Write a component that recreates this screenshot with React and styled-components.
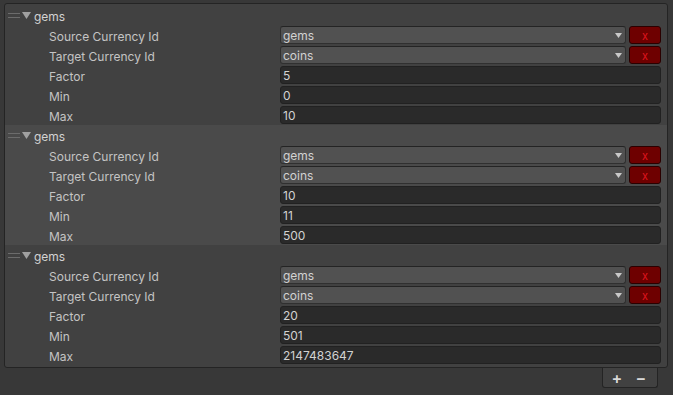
import React from "react";
import styled, { createGlobalStyle } from "styled-components";

const Global = createGlobalStyle`
  html, body { margin: 0; padding: 0; background: #383838; }
  body { font-family: Inter, "Noto Sans", sans-serif; font-size: 12px; color: #c4c4c4; }
  * { box-sizing: border-box; }
`;

const Page = styled.div`
  width: 673px;
  height: 395px;
  padding: 3px 5px 0 4px;
  display: flex;
  flex-direction: column;
  align-items: stretch;
`;

const List = styled.div`
  background: #414141;
  border: 1px solid #242424;
  border-radius: 3px;
  padding: 1px 0 2px 0;
  display: flex;
  flex-direction: column;
`;

const Element = styled.div`
  background: ${(p) => (p.$active ? "#4a4a4a" : "transparent")};
  display: flex;
  flex-direction: column;
`;

const Header = styled.div`
  height: 20px;
  display: flex;
  align-items: center;
  padding-left: 3px;
  color: #d2d2d2;
`;

const HeaderText = styled.span`
  padding-top: 2px;
`;

const Handle = styled.div`
  width: 12px;
  height: 5px;
  margin-top: 1px;
  border-top: 1px solid #6c6c6c;
  border-bottom: 1px solid #6c6c6c;
  margin-right: 2px;
`;

const Arrow = styled.svg`
  width: 9px;
  height: 7px;
  margin-top: 1px;
  margin-right: 3px;
`;

const Row = styled.div`
  height: 20px;
  display: flex;
  align-items: center;
  padding: 0 6px 0 44px;
`;

const Label = styled.div`
  width: 231px;
  flex-shrink: 0;
  padding-top: 2px;
  color: #c4c4c4;
`;

const Field = styled.div`
  flex: 1;
  height: 18px;
  background: #2a2a2a;
  border: 1px solid #212121;
  border-radius: 3px;
  display: flex;
  align-items: center;
  padding: 1px 0 0 2px;
  color: #d2d2d2;
`;

const Dropdown = styled.div`
  flex: 1;
  height: 18px;
  background: #515151;
  border: 1px solid #303030;
  border-top-color: #242424;
  border-radius: 3px;
  display: flex;
  align-items: center;
  justify-content: space-between;
  padding: 1px 3px 0 2px;
  color: #d2d2d2;
`;

const DropArrow = styled.svg`
  width: 7px;
  height: 5px;
`;

const RemoveButton = styled.div`
  width: 32px;
  height: 18px;
  margin-left: 3px;
  background: #6e0000;
  border: 1px solid #2a0000;
  border-radius: 3px;
  color: #e0141e;
  font-size: 11px;
  padding-top: 1px;
  display: flex;
  align-items: center;
  justify-content: center;
`;

const Footer = styled.div`
  align-self: flex-end;
  margin-right: 10px;
  width: 56px;
  height: 20px;
  background: #414141;
  border: 1px solid #242424;
  border-top: none;
  border-radius: 0 0 3px 3px;
  display: flex;
  align-items: center;
  justify-content: space-around;
  padding: 0 4px 0 2px;
  color: #d8d8d8;
  font-size: 16px;
  font-weight: 600;
`;

const items = [
  { src: "gems", tgt: "coins", factor: "5", min: "0", max: "10" },
  { src: "gems", tgt: "coins", factor: "10", min: "11", max: "500" },
  { src: "gems", tgt: "coins", factor: "20", min: "501", max: "2147483647" },
];

function Select({ value }) {
  return (
    <>
      <Dropdown>
        <span>{value}</span>
        <DropArrow viewBox="0 0 7 5">
          <path d="M0 0 H7 L3.5 5 Z" fill="#c8c8c8" />
        </DropArrow>
      </Dropdown>
      <RemoveButton>x</RemoveButton>
    </>
  );
}

export default function App() {
  return (
    <Page>
      <Global />
      <List>
        {items.map((it, i) => (
          <Element key={i} $active={i === 1}>
            <Header>
              <Handle />
              <Arrow viewBox="0 0 9 7">
                <path d="M0 0 H9 L4.5 7 Z" fill="#a0a0a0" />
              </Arrow>
              <HeaderText>{it.src}</HeaderText>
            </Header>
            <Row>
              <Label>Source Currency Id</Label>
              <Select value={it.src} />
            </Row>
            <Row>
              <Label>Target Currency Id</Label>
              <Select value={it.tgt} />
            </Row>
            <Row>
              <Label>Factor</Label>
              <Field>{it.factor}</Field>
            </Row>
            <Row>
              <Label>Min</Label>
              <Field>{it.min}</Field>
            </Row>
            <Row>
              <Label>Max</Label>
              <Field>{it.max}</Field>
            </Row>
          </Element>
        ))}
      </List>
      <Footer>
        <span>+</span>
        <span>−</span>
      </Footer>
    </Page>
  );
}
